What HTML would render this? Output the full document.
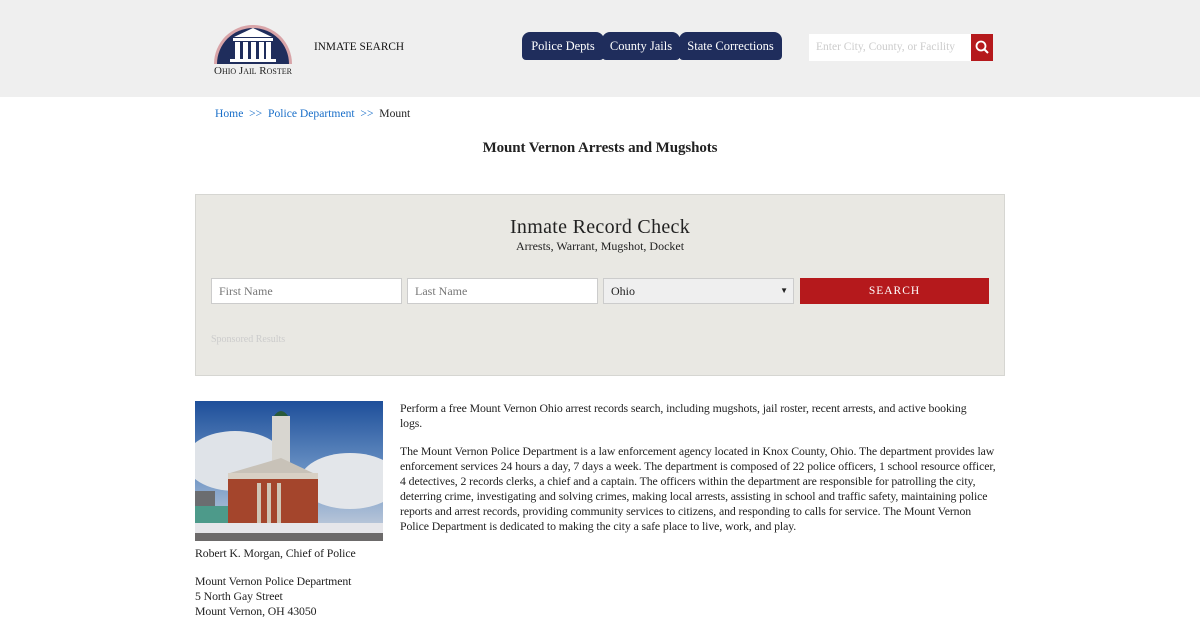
<!DOCTYPE html>
<html><head><meta charset="utf-8"><style>
*{box-sizing:border-box;margin:0;padding:0}
body{width:1200px;height:620px;overflow:hidden;background:#fff;font-family:"Liberation Serif","DejaVu Serif",serif;color:#222;font-size:12.5px}
.hdr{height:97px;background:#efefef;position:relative}
.logo{position:absolute;left:208px;top:20px;width:90px;height:58px}
.is{position:absolute;left:314px;top:41px;font-size:11.3px;color:#111}
.tab{position:absolute;top:32px;height:28px;background:#1f2d5c;color:#fff;border-radius:8px 8px 4px 4px;font-size:12.5px;line-height:28px;text-align:center}
.srch{position:absolute;left:809px;top:34px;width:162px;height:27px;background:#fff;color:#ccc;font-size:11.5px;line-height:27px;padding-left:7px}
.sbtn{position:absolute;left:971px;top:34px;width:22px;height:27px;background:#b5191c}
.bc{position:absolute;left:215px;top:107px;font-size:11.6px}
.bc a{color:#1a6fc9;text-decoration:none}
h1{position:absolute;top:140px;width:1200px;text-align:center;font-size:15px;font-weight:bold;color:#222;letter-spacing:-.1px}
.box{position:absolute;left:195px;top:194px;width:810px;height:182px;background:#e9e8e3;border:1px solid #d6d6d2}
.box h2{position:absolute;top:21px;width:100%;text-align:center;font-weight:normal;font-size:20px;color:#222;letter-spacing:.3px}
.box .sub{position:absolute;top:44px;width:100%;text-align:center;font-size:12px}
.in{position:absolute;top:83px;height:26px;background:#fff;border:1px solid #ccc;font-size:12px;color:#777;line-height:24px;padding-left:7px}
.btn{position:absolute;left:604px;top:83px;width:189px;height:26px;background:#b5191c;color:#fff;text-align:center;line-height:26px;font-size:11.5px;letter-spacing:1px}
.sp{position:absolute;left:15px;top:139px;font-size:10px;color:#ccc}
.txt{position:absolute;left:400px;top:401px;width:600px;font-size:11.8px;line-height:15px;letter-spacing:-.1px}
.txt p{margin-bottom:13px}
.cap{position:absolute;left:195px;font-size:11.8px;line-height:15px;letter-spacing:-.1px}
</style></head><body>
<div class="hdr">
<svg class="logo" viewBox="0 0 90 58">
<path d="M6 44 A39 39 0 0 1 84 44 Z" fill="#d8a4a8"/>
<path d="M9 44 A36 36 0 0 1 81 44 Z" fill="#1f2d5c"/>
<polygon points="26,17 45,8 64,17" fill="#fff"/>
<rect x="25" y="18" width="40" height="3" fill="#fff"/>
<g fill="#fff"><rect x="27" y="22" width="5" height="17"/><rect x="35" y="22" width="5" height="17"/><rect x="43" y="22" width="5" height="17"/><rect x="51" y="22" width="5" height="17"/><rect x="58" y="22" width="5" height="17"/></g>
<rect x="22" y="39" width="46" height="3" fill="#fff"/>
<text x="45" y="54" text-anchor="middle" font-size="11" font-family="Liberation Serif" fill="#222" style="font-variant:small-caps">Ohio Jail Roster</text>
</svg>
<div class="is">INMATE SEARCH</div>
<div class="tab" style="left:522px;width:82px">Police Depts</div>
<div class="tab" style="left:602px;width:78px">County Jails</div>
<div class="tab" style="left:679px;width:103px">State Corrections</div>
<div class="srch">Enter City, County, or Facility</div>
<div class="sbtn"><svg width="22" height="27"><circle cx="10" cy="12" r="4.5" fill="none" stroke="#fff" stroke-width="1.8"/><line x1="13" y1="15" x2="17" y2="19" stroke="#fff" stroke-width="2"/></svg></div>
</div>
<div class="bc"><a>Home</a> &nbsp;<a>&gt;&gt;</a>&nbsp; <a>Police Department</a> &nbsp;<a>&gt;&gt;</a>&nbsp; Mount</div>
<h1>Mount Vernon Arrests and Mugshots</h1>
<div class="box">
<h2>Inmate Record Check</h2>
<div class="sub">Arrests, Warrant, Mugshot, Docket</div>
<div class="in" style="left:15px;width:191px">First Name</div>
<div class="in" style="left:211px;width:191px">Last Name</div>
<div class="in" style="left:407px;width:191px;background:#efefef;color:#222">Ohio<span style="position:absolute;right:5px;font-size:8px">▼</span></div>
<div class="btn">SEARCH</div>
<div class="sp">Sponsored Results</div>
</div>
<svg style="position:absolute;left:195px;top:401px" width="188" height="140" viewBox="0 0 188 140">
<defs><linearGradient id="sk" x1="0" y1="0" x2="0" y2="1"><stop offset="0" stop-color="#1e4f9a"/><stop offset=".5" stop-color="#6a92c4"/><stop offset="1" stop-color="#d0d6df"/></linearGradient></defs>
<rect width="188" height="140" fill="url(#sk)"/>
<ellipse cx="40" cy="60" rx="50" ry="30" fill="#dfe3e8"/>
<ellipse cx="155" cy="80" rx="50" ry="28" fill="#e3e6ea"/>
<rect x="0" y="90" width="20" height="30" fill="#6b6d70"/>
<rect x="0" y="105" width="35" height="20" fill="#4d9a8a"/>
<rect x="77" y="15" width="18" height="50" fill="#d8d6d0"/>
<path d="M79 15 Q86 5 93 15 Z" fill="#2a5a3a"/>
<polygon points="35,72 86,57 118,72" fill="#c8c2b8"/>
<rect x="33" y="72" width="90" height="50" fill="#a4452c"/>
<rect x="33" y="72" width="90" height="6" fill="#d8d0c4"/>
<g fill="#cfc6b6"><rect x="62" y="82" width="4" height="40"/><rect x="72" y="82" width="4" height="40"/><rect x="82" y="82" width="4" height="40"/></g>
<rect x="0" y="122" width="188" height="18" fill="#e6e6ea"/>
<rect x="0" y="132" width="188" height="8" fill="#6c6a6a"/>
</svg>
<div class="cap" style="top:546px">Robert K. Morgan, Chief of Police</div>
<div class="cap" style="top:574px">Mount Vernon Police Department<br>5 North Gay Street<br>Mount Vernon, OH 43050</div>
<div class="txt">
<p style="width:585px">Perform a free Mount Vernon Ohio arrest records search, including mugshots, jail roster, recent arrests, and active booking logs.</p>
<p>The Mount Vernon Police Department is a law enforcement agency located in Knox County, Ohio. The department provides law enforcement services 24 hours a day, 7 days a week. The department is composed of 22 police officers, 1 school resource officer, 4 detectives, 2 records clerks, a chief and a captain. The officers within the department are responsible for patrolling the city, deterring crime, investigating and solving crimes, making local arrests, assisting in school and traffic safety, maintaining police reports and arrest records, providing community services to citizens, and responding to calls for service. The Mount Vernon Police Department is dedicated to making the city a safe place to live, work, and play.</p>
</div>
</body></html>
